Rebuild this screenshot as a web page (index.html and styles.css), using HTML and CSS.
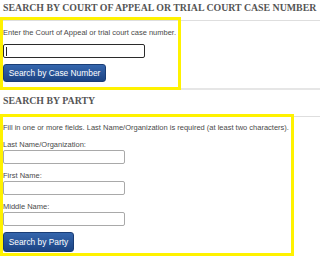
FILE: index.html
```html
<!DOCTYPE html>
<html>
<head>
<meta charset="utf-8">
<link rel="stylesheet" href="styles.css">
</head>
<body>
<div class="block">
  <h2 class="title t1">SEARCH BY COURT OF APPEAL OR TRIAL COURT CASE NUMBER</h2>
  <div class="hl hl1">
    <p class="note">Enter the Court of Appeal or trial court case number.</p>
    <div class="input dark"><span class="caret"></span></div>
    <button class="btn b1">Search by Case Number</button>
  </div>
</div>
<div class="block2">
  <h2 class="title t2">SEARCH BY PARTY</h2>
  <div class="hl hl2">
    <p class="note">Fill in one or more fields. Last Name/Organization is required (at least two characters).</p>
    <label class="lbl first">Last Name/Organization:</label>
    <div class="input"></div>
    <label class="lbl">First Name:</label>
    <div class="input"></div>
    <label class="lbl">Middle Name:</label>
    <div class="input"></div>
    <button class="btn b2">Search by Party</button>
  </div>
</div>
</body>
</html>
```
FILE: styles.css
```css
html, body {
  margin: 0;
  padding: 0;
  background: #ffffff;
  width: 320px;
  height: 256px;
  overflow: hidden;
}
body {
  font-family: "Liberation Sans", Arial, sans-serif;
  font-size: 7.5px;
  line-height: 9px;
  color: #4a4a4a;
}
.title {
  margin: 0;
  font-family: "Liberation Serif", "Times New Roman", serif;
  font-weight: bold;
  font-size: 9.85px;
  line-height: 11px;
  color: #555555;
  padding-left: 3px;
  border-bottom: 1px solid #dedede;
  box-sizing: border-box;
  white-space: nowrap;
}
.t1 {
  height: 21px;
  padding-top: 2px;
}
.t2 {
  height: 27px;
  padding-top: 5px;
}
.block {
  border-bottom: 2px solid #e6e6e6;
}
.hl {
  border: 3px solid #fff200;
  box-sizing: border-box;
  display: flex;
  flex-direction: column;
  align-items: flex-start;
}
.hl1 {
  width: 181px;
  margin-top: -4px;
  margin-bottom: -2px;
  padding: 8px 0 5px 0;
}
.hl2 {
  width: 294px;
  margin-top: -3px;
  padding: 6px 0 1px 0;
}
.note {
  margin: 0;
}
.lbl {
  display: block;
  margin-top: 7px;
}
.lbl.first {
  margin-top: 8px;
}
.input {
  box-sizing: border-box;
  width: 122px;
  height: 14px;
  border: 1px solid #a9a9a9;
  border-radius: 2px;
  background: #ffffff;
  margin-top: 1px;
}
.input.dark {
  width: 142px;
  height: 14px;
  border-color: #2b2b2b;
  margin-top: 7px;
}
.caret {
  display: block;
  width: 1px;
  height: 9px;
  background: #222;
  margin: 2px 0 0 2px;
}
.btn {
  font-family: "Liberation Sans", Arial, sans-serif;
  font-size: 8.4px;
  color: #ffffff;
  border: 1px solid #1a3d75;
  border-radius: 3px;
  background: linear-gradient(#3566ad, #1c4484);
  padding: 0;
  box-sizing: border-box;
}
.b1 {
  width: 103px;
  height: 18px;
  margin-top: 6px;
}
.b2 {
  width: 71px;
  height: 20px;
  margin-top: 6px;
}
```
